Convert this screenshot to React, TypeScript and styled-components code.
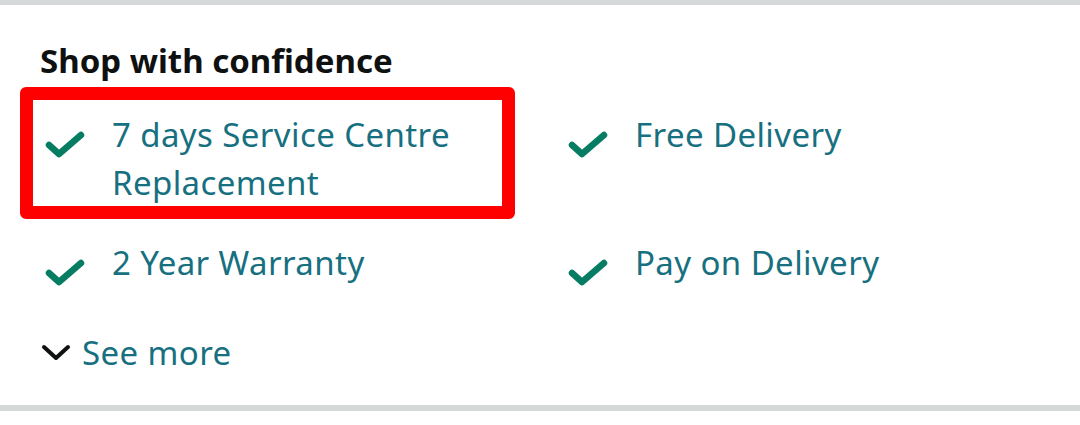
import React from "react";
import styled, { createGlobalStyle } from "styled-components";

const GlobalStyle = createGlobalStyle`
  body {
    margin: 0;
    background: #fff;
    font-family: "Noto Sans", "Liberation Sans", sans-serif;
  }
`;

const Section = styled.section`
  border-top: 5px solid #d5d9d9;
  border-bottom: 6px solid #d5d9d9;
  height: 411px;
  box-sizing: border-box;
  padding: 34px 0 0 40px;
`;

const Heading = styled.h2`
  margin: 0;
  font-size: 33px;
  line-height: 44px;
  font-weight: 700;
  color: #0f1111;
`;

const Grid = styled.ul`
  list-style: none;
  margin: 28px 0 0;
  padding: 0;
  display: grid;
  grid-template-columns: 523px 1fr;
  row-gap: 32px;
`;

const Item = styled.li<{ $highlighted?: boolean }>`
  position: relative;
  display: flex;
  align-items: flex-start;
  width: 462px;

  &::after {
    content: "";
    display: ${(p) => (p.$highlighted ? "block" : "none")};
    position: absolute;
    top: -24px;
    left: -20px;
    right: -13px;
    bottom: -12px;
    border: 13px solid #ff0000;
    border-radius: 6px;
    pointer-events: none;
  }
`;

const Check = styled.svg`
  flex: none;
  width: 44px;
  height: 30px;
  margin: 18px 25px 0 3px;
`;

const Label = styled.span`
  font-size: 33px;
  letter-spacing: 0.4px;
  line-height: 48px;
  color: #17707f;
`;

const SeeMore = styled.button`
  display: flex;
  align-items: center;
  gap: 10px;
  margin-top: 44px;
  padding: 0;
  border: none;
  background: none;
  font-family: inherit;
  font-size: 33px;
  letter-spacing: 0.4px;
  line-height: 44px;
  color: #17707f;
  cursor: pointer;
`;

const Chevron = styled.svg`
  width: 32px;
  height: 20px;
`;

const CheckIcon = () => (
  <Check viewBox="0 0 44 30">
    <path
      d="M6 16 L16 25 L38 6"
      fill="none"
      stroke="#067d62"
      strokeWidth="6.5"
      strokeLinecap="round"
      strokeLinejoin="round"
    />
  </Check>
);

const perks = [
  { text: "7 days Service Centre Replacement", highlighted: true },
  { text: "Free Delivery" },
  { text: "2 Year Warranty" },
  { text: "Pay on Delivery" },
];

const App = () => (
  <>
    <GlobalStyle />
    <Section>
      <Heading>Shop with confidence</Heading>
      <Grid>
        {perks.map((perk) => (
          <Item key={perk.text} $highlighted={perk.highlighted}>
            <CheckIcon />
            <Label>{perk.text}</Label>
          </Item>
        ))}
      </Grid>
      <SeeMore>
        <Chevron viewBox="0 0 32 20">
          <path
            d="M4 4 L16 15 L28 4"
            fill="none"
            stroke="#0f1111"
            strokeWidth="4"
            strokeLinecap="round"
            strokeLinejoin="round"
          />
        </Chevron>
        See more
      </SeeMore>
    </Section>
  </>
);

export default App;
